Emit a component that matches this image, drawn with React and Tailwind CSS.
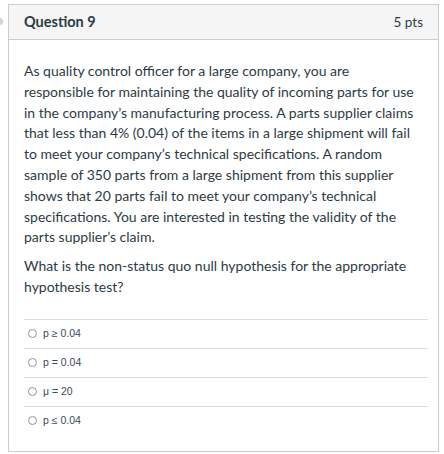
import React from "react";

const answers = ["p ≥ 0.04", "p = 0.04", "μ = 20", "p ≤ 0.04"];

const App = () => {
  return (
    <div className="relative min-h-[454px] bg-white pt-[4px] pl-[8px]">
      <span className="absolute left-[-4px] top-[18px] w-[7px] h-[7px] rounded-full bg-[#c9d5e1]"></span>
      <div
        className="w-[431px] border border-[#c7cdd1] bg-white text-[#2d3b45]"
        style={{ fontFamily: "Lato, 'Noto Sans', sans-serif" }}
      >
        <div className="h-[35px] flex items-center justify-between px-[15px] bg-[#f5f5f5] border-b border-[#c7cdd1]">
          <span className="text-[14.5px] font-bold">Question 9</span>
          <span className="text-[13.5px]">5 pts</span>
        </div>

        <div className="pt-[21px] pl-[15px] pr-[16px] text-[14px] leading-[20.8px]">
          <p className="mb-[8px]">
            As quality control officer for a large company, you are
            responsible for maintaining the quality of incoming parts for use
            in the company’s manufacturing process. A parts supplier claims
            that less than 4% (0.04) of the items in a large shipment will
            fail to meet your company’s technical specifications. A random
            sample of 350 parts from a large shipment from this supplier shows
            that 20 parts fail to meet your company’s technical
            specifications. You are interested in testing the validity of the
            parts supplier’s claim.
          </p>
          <p>
            What is the non-status quo null hypothesis for the appropriate
            hypothesis test?
          </p>
        </div>

        <div className="mt-[21px] ml-[15px] mr-[10px] pb-[16px]">
          {answers.map((answer, index) => (
            <div
              key={index}
              className="h-[29px] flex items-center border-t border-[#dadcde]"
            >
              <span className="ml-[4px] w-[9px] h-[9px] rounded-full border border-[#8b969e] bg-white"></span>
              <span
                className="ml-[6px] text-[10.5px] text-[#3b4a5a]"
                style={{ fontFamily: "'Liberation Sans', Arial, sans-serif" }}
              >
                {answer}
              </span>
            </div>
          ))}
        </div>
      </div>
    </div>
  );
};

export default App;
